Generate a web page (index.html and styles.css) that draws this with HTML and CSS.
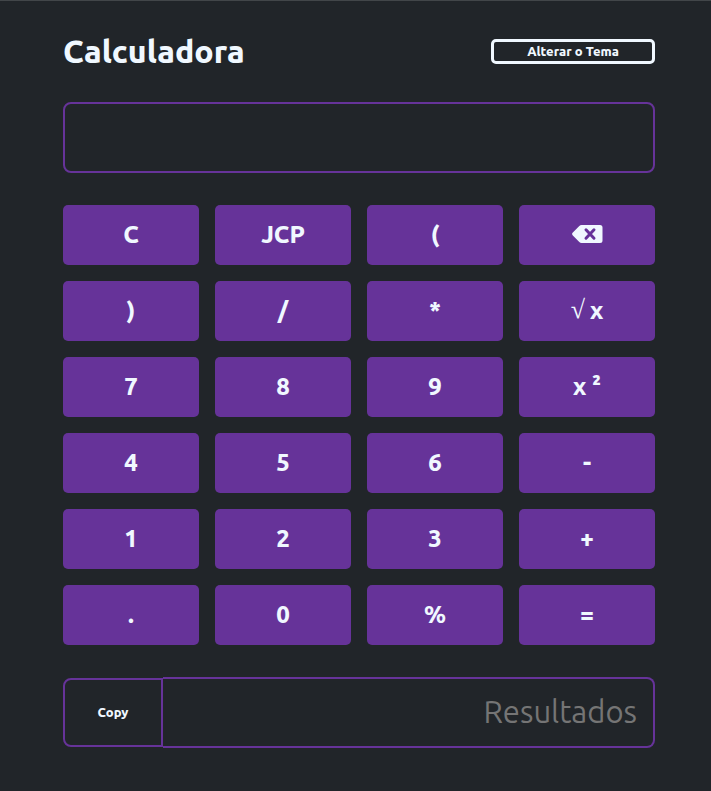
FILE: index.html
```html
<!DOCTYPE html>
<html lang="pt-BR">
<head>
<meta charset="utf-8">
<meta name="viewport" content="width=device-width, initial-scale=1">
<title>Calculadora</title>
<link rel="stylesheet" href="styles.css">
</head>
<body>
<main class="calculator">
  <header class="header">
    <h1 class="title">Calculadora</h1>
    <button class="theme-button" type="button">Alterar o Tema</button>
  </header>
  <input class="field expression" type="text" aria-label="Expressão">
  <div class="keys">
    <button class="key" type="button">C</button>
    <button class="key" type="button">JCP</button>
    <button class="key" type="button">(</button>
    <button class="key" type="button" aria-label="Apagar">
      <svg class="backspace" viewBox="0 0 31 18" aria-hidden="true">
        <path fill="currentColor" d="M.6 7.8 7.3 1Q8.2 0 9.6 0H28Q30.500 0 30.500 2.500V15.500Q30.500 18 28 18H9.6Q8.200 18 7.300 17L.6 10.200Q-.4 9 .6 7.800Z"/>
        <path class="cross" d="M14 4.800 22 13.200M22 4.800 14 13.200"/>
      </svg>
    </button>
    <button class="key" type="button">)</button>
    <button class="key" type="button">/</button>
    <button class="key" type="button">*</button>
    <button class="key" type="button"><span class="radical">√</span> x</button>
    <button class="key" type="button">7</button>
    <button class="key" type="button">8</button>
    <button class="key" type="button">9</button>
    <button class="key" type="button">x ²</button>
    <button class="key" type="button">4</button>
    <button class="key" type="button">5</button>
    <button class="key" type="button">6</button>
    <button class="key" type="button">-</button>
    <button class="key" type="button">1</button>
    <button class="key" type="button">2</button>
    <button class="key" type="button">3</button>
    <button class="key" type="button">+</button>
    <button class="key" type="button">.</button>
    <button class="key" type="button">0</button>
    <button class="key" type="button">%</button>
    <button class="key" type="button">=</button>
  </div>
  <div class="output">
    <button class="copy-button" type="button">Copy</button>
    <input class="field result" type="text" placeholder="Resultados" aria-label="Resultados">
  </div>
</main>
</body>
</html>
```
FILE: styles.css
```css
:root {
  --background: #212529;
  --primary: #663399;
  --text: #f0f8ff;
}

* {
  box-sizing: border-box;
  margin: 0;
}

body {
  min-height: 100vh;
  border-top: 1px solid #424649;
  background: var(--background);
  color: var(--text);
  font-family: Ubuntu, "Noto Sans", sans-serif;
}

button,
input {
  color: inherit;
  font-family: inherit;
}

button {
  padding: 0 0 2px;
  font-weight: 800;
  cursor: pointer;
}

.calculator {
  display: flex;
  flex-direction: column;
  gap: 32px;
  padding: 32px 56px 32px 63px;
}

.header {
  display: flex;
  align-items: center;
  justify-content: space-between;
}

.title {
  font-size: 32px;
  font-weight: 800;
  line-height: 37px;
}

.theme-button {
  width: 164px;
  height: 25px;
  border: 3px solid var(--text);
  border-radius: 5px;
  background: transparent;
  font-size: 13px;
  line-height: 16px;
}

.field {
  min-width: 0;
  height: 71px;
  padding: 0 16px 2px;
  border: 2px solid var(--primary);
  border-radius: 8px;
  background: transparent;
  font-size: 31px;
}

.expression {
  width: 100%;
}

.keys {
  display: grid;
  grid-template-columns: repeat(4, 1fr);
  gap: 16px;
}

.key {
  display: flex;
  align-items: center;
  justify-content: center;
  gap: 5px;
  height: 60px;
  border: 0;
  border-radius: 5px;
  background: var(--primary);
  font-size: 24px;
}

.backspace {
  width: 31px;
  height: 18px;
}

.cross {
  fill: none;
  stroke: var(--primary);
  stroke-width: 3;
  stroke-linecap: round;
}

.radical {
  font-family: "Liberation Serif", serif;
  font-size: 26px;
  font-weight: 400;
}

.output {
  display: flex;
  align-items: center;
}

.copy-button {
  width: 100px;
  height: 69px;
  border: 2px solid var(--primary);
  border-radius: 8px 0 0 8px;
  background: transparent;
  font-size: 13px;
}

.result {
  flex: 1;
  border-left: 0;
  border-radius: 0 8px 8px 0;
  text-align: right;
}

.result::placeholder {
  color: #757575;
  font-weight: 400;
  opacity: 1;
}
```
